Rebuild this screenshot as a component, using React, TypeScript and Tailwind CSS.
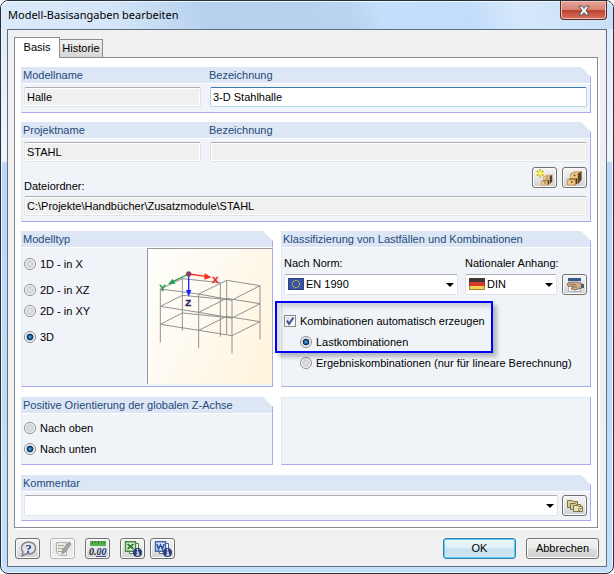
import { useState, type ReactNode } from "react";

/* ---------- icons ---------- */

function Drawers() {
  return (
    <>
      <path d="M4 4 9 1h8l-4 3z" fill="#d9b478" />
      <path d="M13 4l4-3v10l-4 5z" fill="#5d4020" />
      <path d="M4 4h9v12H4z" fill="#c49455" />
      <path d="M5 5h7v4H5z" fill="#f2cf8f" />
      <path d="M1 11l3-2h8l-2 2z" fill="#a57a42" />
      <path d="M10 11l2-2v6l-2 2z" fill="#4a3015" />
      <path d="M1 11h9v6H1z" fill="#f2c98a" stroke="#a5783e" strokeWidth=".7" />
      <path d="M8 6h2v1H8zM5 13h2v1H5z" fill="#21140a" />
    </>
  );
}

function CabinetIcon() {
  return (
    <svg viewBox="0 0 18 18" className="h-4 w-[17px]" aria-hidden="true">
      <Drawers />
    </svg>
  );
}

function NewCabinetIcon() {
  return (
    <svg viewBox="0 0 18 18" className="h-[17px] w-[17px]" aria-hidden="true">
      <g transform="translate(5 5) scale(0.72)">
        <Drawers />
      </g>
      <path d="M4.500 0v9M1 2l7 5M8 2L1 7" stroke="#c2ae10" strokeWidth="1.4" />
      <circle cx="4.500" cy="4.500" r="2.500" fill="#ffee2e" />
      <circle cx="4.500" cy="4.500" r="1" fill="#fffde0" />
    </svg>
  );
}

function HandCardIcon() {
  return (
    <svg viewBox="0 0 18 16" className="h-4 w-[18px]" aria-hidden="true">
      <path d="M2.500 1.500h12v13h-12z" fill="#f6f8fb" stroke="#a3b1c4" />
      <path d="M2 1h13v3H2z" fill="#33598f" />
      <path d="M1 7l3-2 8 0 4 2v4l-4 1-3 1-4-1 2-2-5-1z" fill="#d0ab8a" stroke="#6d5646" strokeWidth=".8" />
      <path d="M4 7l6 1M6 10l5 0" stroke="#7b5f49" strokeWidth=".8" />
      <path d="M15 7h3v4h-3z" fill="#555b66" />
    </svg>
  );
}

function CardsIcon() {
  return (
    <svg viewBox="0 0 18 14" className="h-[14px] w-[18px]" aria-hidden="true">
      <g fill="#d6cf9c" stroke="#7a7448">
        <path d="M1.500 1.500h5l1 1h4v6h-10z" />
        <path d="M4.500 4.500h5l1 1h4v5h-10z" />
        <path d="M7.500 6.500h4l1 1h4v5h-9z" fill="#e8e2b4" />
      </g>
      <path d="M12.500 12.500v-3h3z" fill="#fff" stroke="#7a7448" strokeWidth=".8" />
    </svg>
  );
}

function HelpIcon() {
  return (
    <svg viewBox="0 0 18 16" className="h-4 w-[18px]" aria-hidden="true">
      <path d="M9.500 1c4 0 7 2.500 7 6s-3 6-7 6c-1 0-2 0-2.500-.300L3 15l1-4C3 10 2.500 8.500 2.500 7c0-3.500 3-6 7-6z" fill="#e4e6ea" stroke="#858991" strokeWidth="1.600" />
      <text x="9.500" y="12" textAnchor="middle" fontSize="13" fontWeight="bold" fill="#27468c" fontFamily="'Liberation Serif', serif">?</text>
    </svg>
  );
}

function EditNoteIcon() {
  return (
    <svg viewBox="0 0 18 16" className="h-4 w-[18px]" aria-hidden="true">
      <path d="M2.500 1.500h10v13h-7l-3-3z" fill="#eceae4" stroke="#b3b1ab" />
      <path d="M4 4.500h6M4 7.500h5M4 10.500h4" stroke="#a6a49e" />
      <path d="M8 13l1-5 6-7 2 2-6 8z" fill="#aaa8a3" stroke="#85837e" strokeWidth=".8" />
    </svg>
  );
}

function UnitsIcon() {
  return (
    <svg viewBox="0 0 18 16" className="h-4 w-[18px]" aria-hidden="true">
      <path d="M1 0h16v5H1z" fill="#54b04f" />
      <path d="M3.500 0v3M6.500 0v2M9.500 0v3M12.500 0v2M15 0v3" stroke="#2c7a2a" strokeWidth=".8" />
      <text x="0" y="14" fontSize="10" fontStyle="italic" fontWeight="bold" fill="#1b1b1b" fontFamily="'Liberation Serif', serif">
        0.<tspan fill="#26336f">00</tspan>
      </text>
      <path d="M7 15.500h10" stroke="#3b4a91" />
    </svg>
  );
}

function InfoBadge() {
  return (
    <>
      <circle cx="13.500" cy="11.500" r="4.300" fill="#2b3f80" stroke="#1c2a5c" strokeWidth=".6" />
      <path d="M13.500 8v1.500M12.500 11h1.500v3M12 14h3.500" stroke="#fff" strokeWidth="1.200" fill="none" />
    </>
  );
}

function ExcelIcon() {
  return (
    <svg viewBox="0 0 18 16" className="h-4 w-[18px]" aria-hidden="true">
      <path d="M5.500 2.500h9v10h-9z" fill="#fff" stroke="#3f8a42" />
      <path d="M1.500.700h10v9.500h-10z" fill="#dff0dc" stroke="#3f8a42" strokeWidth="1.400" />
      <path d="M3.500 3l6 5M9.500 3l-6 5" stroke="#2f7a35" strokeWidth="1.800" />
      <InfoBadge />
    </svg>
  );
}

function WordIcon() {
  return (
    <svg viewBox="0 0 18 16" className="h-4 w-[18px]" aria-hidden="true">
      <path d="M5.500 2.500h9v10h-9z" fill="#fff" stroke="#4566ae" />
      <path d="M1.500.700h10v9.500h-10z" fill="#dfe8f9" stroke="#4566ae" strokeWidth="1.400" />
      <path d="M3 3l1.500 5L6.500 4l2 4L10 3" stroke="#2f52a3" strokeWidth="1.600" fill="none" />
      <InfoBadge />
    </svg>
  );
}

function EuFlag() {
  return (
    <svg viewBox="0 0 16 12" className="h-3 w-4" aria-hidden="true">
      <path d="M0 0h16v12H0z" fill="#3853a4" />
      <circle cx="8" cy="6" r="3.600" fill="none" stroke="#e8d84a" strokeWidth="1.100" strokeDasharray="1 .885" />
      <path d="M.500.500h15v11H.500z" fill="none" stroke="#2b4187" />
    </svg>
  );
}

function GermanFlag() {
  return (
    <svg viewBox="0 0 16 12" className="h-3 w-4" aria-hidden="true">
      <path d="M0 0h16v4H0z" fill="#3b3736" />
      <path d="M0 4h16v4H0z" fill="#d8392c" />
      <path d="M0 8h16v4H0z" fill="#f4cf52" />
      <path d="M.500.500h15v11H.500z" fill="none" stroke="#5a3526" strokeOpacity=".5" />
    </svg>
  );
}

function FramePreview() {
  return (
    <svg viewBox="24 27 372 405" className="block h-[135px] w-[124px]" role="img" aria-label="3D">
      <g fill="none" stroke="#929292" strokeWidth="3">
        <path d="M61 147V307M127 112V272M176 162V325M241 128V290M260 120V282M276 180V341M360 137V298" />
        <path d="M61 147L176 162L276 180L360 137L260 121L176 162M61 147L127 116L241 128" />
        <path d="M61 199L176 217L276 234L360 191L260 175L176 217M61 199L127 166L276 180" />
        <path d="M61 253L176 271L276 287L360 245L260 229L176 271M61 253L127 219L276 234" />
      </g>
      <path d="M146 102L198 109" stroke="#ff2a1c" strokeWidth="4" />
      <path d="M194 100L214 112L193 119z" fill="#ff2a1c" />
      <path d="M146 102L100 124" stroke="#22a05a" strokeWidth="4" />
      <path d="M84 133L98 116L106 131z" fill="#22a05a" />
      <path d="M146 102V152" stroke="#1c22ff" strokeWidth="4" />
      <path d="M138 150H154L146 170z" fill="#1c22ff" />
      <circle cx="146" cy="102" r="8" fill="#8a3d66" />
      <g fontFamily="'Liberation Sans', Arial, sans-serif" fontWeight="bold" fontSize="29" strokeWidth="1">
        <text x="216" y="129" fill="#f0231a" stroke="#f0231a">X</text>
        <text x="58" y="153" fill="#1f9a52" stroke="#1f9a52">Y</text>
        <text x="136" y="198" fill="#2c1d66" stroke="#2c1d66">Z</text>
      </g>
    </svg>
  );
}

/* ---------- building blocks ---------- */

function Group({ header, children, className = "" }: { header: ReactNode; children: ReactNode; className?: string }) {
  return (
    <section className={`flex flex-col ${className}`}>
      <div className="h-4 border-r border-[#a8a8ec] bg-[#dce6f4] pl-0.5 leading-4 text-[#1e4a7a] [clip-path:polygon(0_0,calc(100%-10px)_0,100%_10px,100%_100%,0_100%)]">
        {header}
      </div>
      <div className="flex-1 border border-t-white border-r-[#a8a8ec] border-b-[#a8a8ec] border-l-[#dce6f4] bg-[#f0f4f9]">
        {children}
      </div>
    </section>
  );
}

const fieldBase = "h-5 w-full min-w-0 border px-0.5 outline-none";
const fieldReadOnly =
  "rounded-xs border-[#e2e3ea] border-t-[#abadb3] bg-[#f0f0f0] shadow-[inset_0_0_0_1px_#fff]";
const fieldEditable = "rounded-xs border-[#b7d9ed] border-t-[#3d7bad] bg-white";

function IconButton({ label, children, disabled = false }: { label: string; children: ReactNode; disabled?: boolean }) {
  return (
    <button
      type="button"
      aria-label={label}
      disabled={disabled}
      className="flex h-[21px] w-[25px] shrink-0 items-center justify-center rounded-[3px] border border-[#707070] bg-linear-to-b from-[#f4f4f4] via-[#e6e6e6] to-[#d0d0d0] shadow-[inset_0_0_0_1px_#fcfcfc] disabled:border-[#b4b6b9] disabled:from-[#f4f4f4] disabled:to-[#f0f0f0]"
    >
      {children}
    </button>
  );
}

interface RadioProps {
  name: string;
  label: string;
  checked: boolean;
  onSelect: () => void;
}

function Radio({ name, label, checked, onSelect }: RadioProps) {
  return (
    <label className="flex h-4 items-center gap-1">
      <input
        type="radio"
        name={name}
        checked={checked}
        onChange={onSelect}
        className="h-3 w-3 shrink-0 appearance-none rounded-full border border-[#8a8c8e] bg-[radial-gradient(circle,#e6e6e6_0,#cdd0d3_48%,#fbfbfb_62%)] checked:bg-[radial-gradient(circle,#6fd0f5_0,#1f68b0_20%,#12305e_42%,#f4f4f4_54%)]"
      />
      {label}
    </label>
  );
}

interface ComboProps {
  id: string;
  options: string[];
  flag?: ReactNode;
}

function Combo({ id, options, flag }: ComboProps) {
  return (
    <div className="relative min-w-0">
      <select
        id={id}
        className={`h-[21px] w-full appearance-none rounded-xs border border-[#e2e3ea] border-t-[#abadb3] bg-white pr-4 outline-none ${flag ? "pl-[21px]" : "pl-1"}`}
      >
        {options.map((o) => (
          <option key={o}>{o}</option>
        ))}
      </select>
      {flag && <span className="pointer-events-none absolute top-1 left-1">{flag}</span>}
      <svg viewBox="0 0 8 4" className="pointer-events-none absolute top-[9px] right-1 h-1 w-2" aria-hidden="true">
        <path d="M0 0h8L4 4z" fill="#000" />
      </svg>
    </div>
  );
}

/* ---------- dialog ---------- */

const modelTypes = [
  { label: "1D - in X", space: "" },
  { label: "2D - in XZ", space: "mt-2.5" },
  { label: "2D - in XY", space: "mt-[5px]" },
  { label: "3D", space: "mt-2.5" },
];

export default function App() {
  const [modelType, setModelType] = useState("3D");
  const [axis, setAxis] = useState("Nach unten");
  const [auto, setAuto] = useState(true);
  const [combination, setCombination] = useState("Lastkombinationen");

  return (
    <div className="min-h-screen bg-white font-['Liberation_Sans',Arial,sans-serif] text-[11px] text-black">
      <div className="flex min-h-screen flex-col rounded-lg border border-[#26303c] bg-[linear-gradient(to_bottom,#dbe9f8_0,#f1f6fc_160px,#bcd7f6_162px,#c4defa_100%)] px-1.5 pb-1.5 shadow-[inset_0_0_0_1px_#eef6fe]">
        <header className="-mx-1.5 flex h-7 items-start justify-between rounded-t-lg bg-[linear-gradient(65deg,#dceafa_0,#d5e6f8_18%,#b6d1ee_34%,#b8d2ef_56%,#c3dffc_62%,#c1ddfb_76%,#d6e8fa_84%,#c6dff8_100%)] pr-1.5 pl-[7px] shadow-[inset_0_1px_0_0_#eef6fe]">
          <h1 className="pt-1 font-['Noto_Sans','Open_Sans',sans-serif] text-[11px] leading-5">Modell-Basisangaben bearbeiten</h1>
          <button
            type="button"
            aria-label="Schließen"
            className="flex h-[19px] w-[47px] items-center justify-center rounded-b-[4px] border border-t-0 border-[#5b2a2a] bg-[linear-gradient(to_bottom,#e5a79a_0,#d88373_48%,#bd4030_50%,#d8705c_100%)] shadow-[inset_0_0_0_1px_#f0c0b6]"
          >
            <svg viewBox="0 0 12 11" className="h-[11px] w-3" aria-hidden="true">
              <path d="M1 1h3l2 2.500L8 1h3L8 5.500 11 10H8L6 7.500 4 10H1l3-4.500z" fill="#fff" stroke="#50555f" />
            </svg>
          </button>
        </header>

        <main className="flex flex-1 flex-col border border-[#5f6f80] bg-[#f0f0f0] pt-[7px] pr-2 pb-[7px] pl-1.5">
          <div role="tablist" className="flex h-5 items-end">
            <button
              type="button"
              role="tab"
              aria-selected="true"
              className="relative -mb-px h-[21px] w-[46px] self-start border border-b-0 border-[#898c95] bg-white pb-0.5"
            >
              Basis
            </button>
            <button
              type="button"
              role="tab"
              aria-selected="false"
              className="h-[18px] w-[43px] border border-b-0 border-l-0 border-[#898c95] bg-linear-to-b from-[#f2f2f2] to-[#d6d6d6]"
            >
              Historie
            </button>
          </div>

          <div role="tabpanel" className="border border-[#898c95] bg-white px-1.5 pt-[9px] pb-1.5 shadow-[2px_2px_0_0_#fff]">
            <Group
              header={
                <div className="grid grid-cols-[177px_1fr] gap-x-[9px]">
                  <label htmlFor="model-name">Modellname</label>
                  <label htmlFor="model-title">Bezeichnung</label>
                </div>
              }
            >
              <div className="grid grid-cols-[177px_1fr] gap-x-[9px] px-[3px] pt-[3px] pb-[5px] pl-0.5">
                <input id="model-name" readOnly defaultValue="Halle" className={`${fieldBase} ${fieldReadOnly}`} />
                <input id="model-title" defaultValue="3-D Stahlhalle" className={`${fieldBase} ${fieldEditable}`} />
              </div>
            </Group>

            <Group
              className="mt-[9px]"
              header={
                <div className="grid grid-cols-[177px_1fr] gap-x-[9px]">
                  <label htmlFor="project-name">Projektname</label>
                  <label htmlFor="project-title">Bezeichnung</label>
                </div>
              }
            >
              <div className="px-[3px] pt-[3px] pb-[5px] pl-0.5">
                <div className="grid grid-cols-[177px_1fr] gap-x-[9px]">
                  <input id="project-name" readOnly defaultValue="STAHL" className={`${fieldBase} ${fieldReadOnly}`} />
                  <input id="project-title" readOnly className={`${fieldBase} ${fieldReadOnly}`} />
                </div>
                <div className="flex items-end gap-[5px] pt-[5px] pb-2">
                  <label htmlFor="folder" className="-mb-1.5 flex-1 leading-4">
                    Dateiordner:
                  </label>
                  <IconButton label="Neues Projekt">
                    <NewCabinetIcon />
                  </IconButton>
                  <IconButton label="Projekt öffnen">
                    <CabinetIcon />
                  </IconButton>
                </div>
                <input
                  id="folder"
                  readOnly
                  defaultValue="C:\Projekte\Handbücher\Zusatzmodule\STAHL"
                  className={`${fieldBase} ${fieldReadOnly}`}
                />
              </div>
            </Group>

            <div className="mt-[9px] grid grid-cols-[252px_1fr] gap-x-2">
              <Group header={<h2>Modelltyp</h2>}>
                <div className="flex justify-between pl-0.5">
                  <div role="radiogroup" aria-label="Modelltyp" className="pt-2">
                    {modelTypes.map((t) => (
                      <div key={t.label} className={t.space}>
                        <Radio
                          name="model-type"
                          label={t.label}
                          checked={modelType === t.label}
                          onSelect={() => setModelType(t.label)}
                        />
                      </div>
                    ))}
                  </div>
                  <div className="mb-0.5 border-t border-l border-[#9a9a9a] bg-[linear-gradient(115deg,#fffefb,#fffaf0_45%,#fff3da)]">
                    <FramePreview />
                  </div>
                </div>
              </Group>

              <Group header={<h2>Klassifizierung von Lastfällen und Kombinationen</h2>}>
                <div className="pt-[7px] pr-[3px] pl-0.5">
                  <div className="grid grid-cols-[1fr_122px] items-end">
                    <label htmlFor="norm" className="leading-4">
                      Nach Norm:
                    </label>
                    <label htmlFor="annex" className="leading-4">
                      Nationaler Anhang:
                    </label>
                  </div>
                  <div className="mt-[3px] flex">
                    <div className="mr-[7px] min-w-0 flex-1">
                      <Combo id="norm" options={["EN 1990", "DIN 1055-100", "DIN 18800"]} flag={<EuFlag />} />
                    </div>
                    <div className="mr-[5px] w-[92px]">
                      <Combo id="annex" options={["DIN", "CEN", "ÖNORM"]} flag={<GermanFlag />} />
                    </div>
                    <IconButton label="Nationalen Anhang bearbeiten">
                      <HandCardIcon />
                    </IconButton>
                  </div>

                  <div className="relative mt-[18px] w-fit">
                    <label className="relative flex h-4 items-center gap-1">
                      <input
                        type="checkbox"
                        checked={auto}
                        onChange={() => setAuto(!auto)}
                        className="peer h-3 w-3 shrink-0 appearance-none border border-[#8a8c8e] bg-linear-to-br from-[#d5d9de] to-white shadow-[inset_0_0_0_1px_#f6f6f6]"
                      />
                      <svg viewBox="0 0 12 12" className="pointer-events-none absolute top-0.5 left-0 hidden h-3 w-3 peer-checked:block" aria-hidden="true">
                        <path d="M3 5.500L5 9L9.500 2.500" stroke="#3d5298" strokeWidth="2" fill="none" />
                      </svg>
                      Kombinationen automatisch erzeugen
                    </label>
                    <div className="mt-[5px] pl-4">
                      <Radio
                        name="combination"
                        label="Lastkombinationen"
                        checked={combination === "Lastkombinationen"}
                        onSelect={() => setCombination("Lastkombinationen")}
                      />
                    </div>
                    <div className="pointer-events-none absolute -top-3 -left-[9px] h-[52px] w-[218px] border-2 border-[#0000f8] shadow-[4px_4px_4px_0_#00000040,inset_4px_4px_4px_0_#00000026]" />
                  </div>
                  <div className="mt-[5px] pl-4">
                    <Radio
                      name="combination"
                      label="Ergebniskombinationen (nur für lineare Berechnung)"
                      checked={combination === "Ergebniskombinationen"}
                      onSelect={() => setCombination("Ergebniskombinationen")}
                    />
                  </div>
                </div>
              </Group>
            </div>

            <div className="mt-2.5 grid grid-cols-[252px_1fr] gap-x-2">
              <Group header={<h2>Positive Orientierung der globalen Z-Achse</h2>}>
                <div role="radiogroup" aria-label="Positive Orientierung der globalen Z-Achse" className="flex flex-col gap-[5px] pt-1.5 pb-[7px] pl-0.5">
                  {["Nach oben", "Nach unten"].map((a) => (
                    <Radio key={a} name="axis" label={a} checked={axis === a} onSelect={() => setAxis(a)} />
                  ))}
                </div>
              </Group>
              <div className="border border-[#dce6f4] border-r-[#a8a8ec] border-b-[#a8a8ec] bg-[#f0f4f9]" />
            </div>

            <Group className="mt-2.5" header={<label htmlFor="comment">Kommentar</label>}>
              <div className="flex gap-1 pt-[3px] pr-[3px] pb-1 pl-0.5">
                <div className="min-w-0 flex-1">
                  <Combo id="comment" options={[""]} />
                </div>
                <IconButton label="Kommentar übernehmen">
                  <CardsIcon />
                </IconButton>
              </div>
            </Group>
          </div>

          <footer className="mt-auto flex items-center justify-between pt-2.5 pl-px">
            <div className="flex gap-2.5">
              <IconButton label="Hilfe">
                <HelpIcon />
              </IconButton>
              <IconButton label="Kommentar bearbeiten" disabled>
                <EditNoteIcon />
              </IconButton>
              <IconButton label="Einheiten und Dezimalstellen">
                <UnitsIcon />
              </IconButton>
              <div className="flex gap-[5px]">
                <IconButton label="Excel-Export">
                  <ExcelIcon />
                </IconButton>
                <IconButton label="Word-Export">
                  <WordIcon />
                </IconButton>
              </div>
            </div>
            <div className="-mr-px flex gap-2.5">
              <button
                type="submit"
                className="h-[21px] w-[73px] rounded-[3px] border border-[#3c7fb1] bg-[linear-gradient(to_bottom,#eef7fb_0,#e0f0f8_48%,#c5dfec_52%,#d3e8f2_100%)] shadow-[inset_0_0_0_1px_#4fd0f8]"
              >
                OK
              </button>
              <button
                type="button"
                className="h-[21px] w-[73px] rounded-[3px] border border-[#707070] bg-[linear-gradient(to_bottom,#f2f2f2_0,#ebebeb_48%,#dddddd_52%,#cfcfcf_100%)] shadow-[inset_0_0_0_1px_#fcfcfc]"
              >
                Abbrechen
              </button>
            </div>
          </footer>
        </main>
      </div>
    </div>
  );
}
